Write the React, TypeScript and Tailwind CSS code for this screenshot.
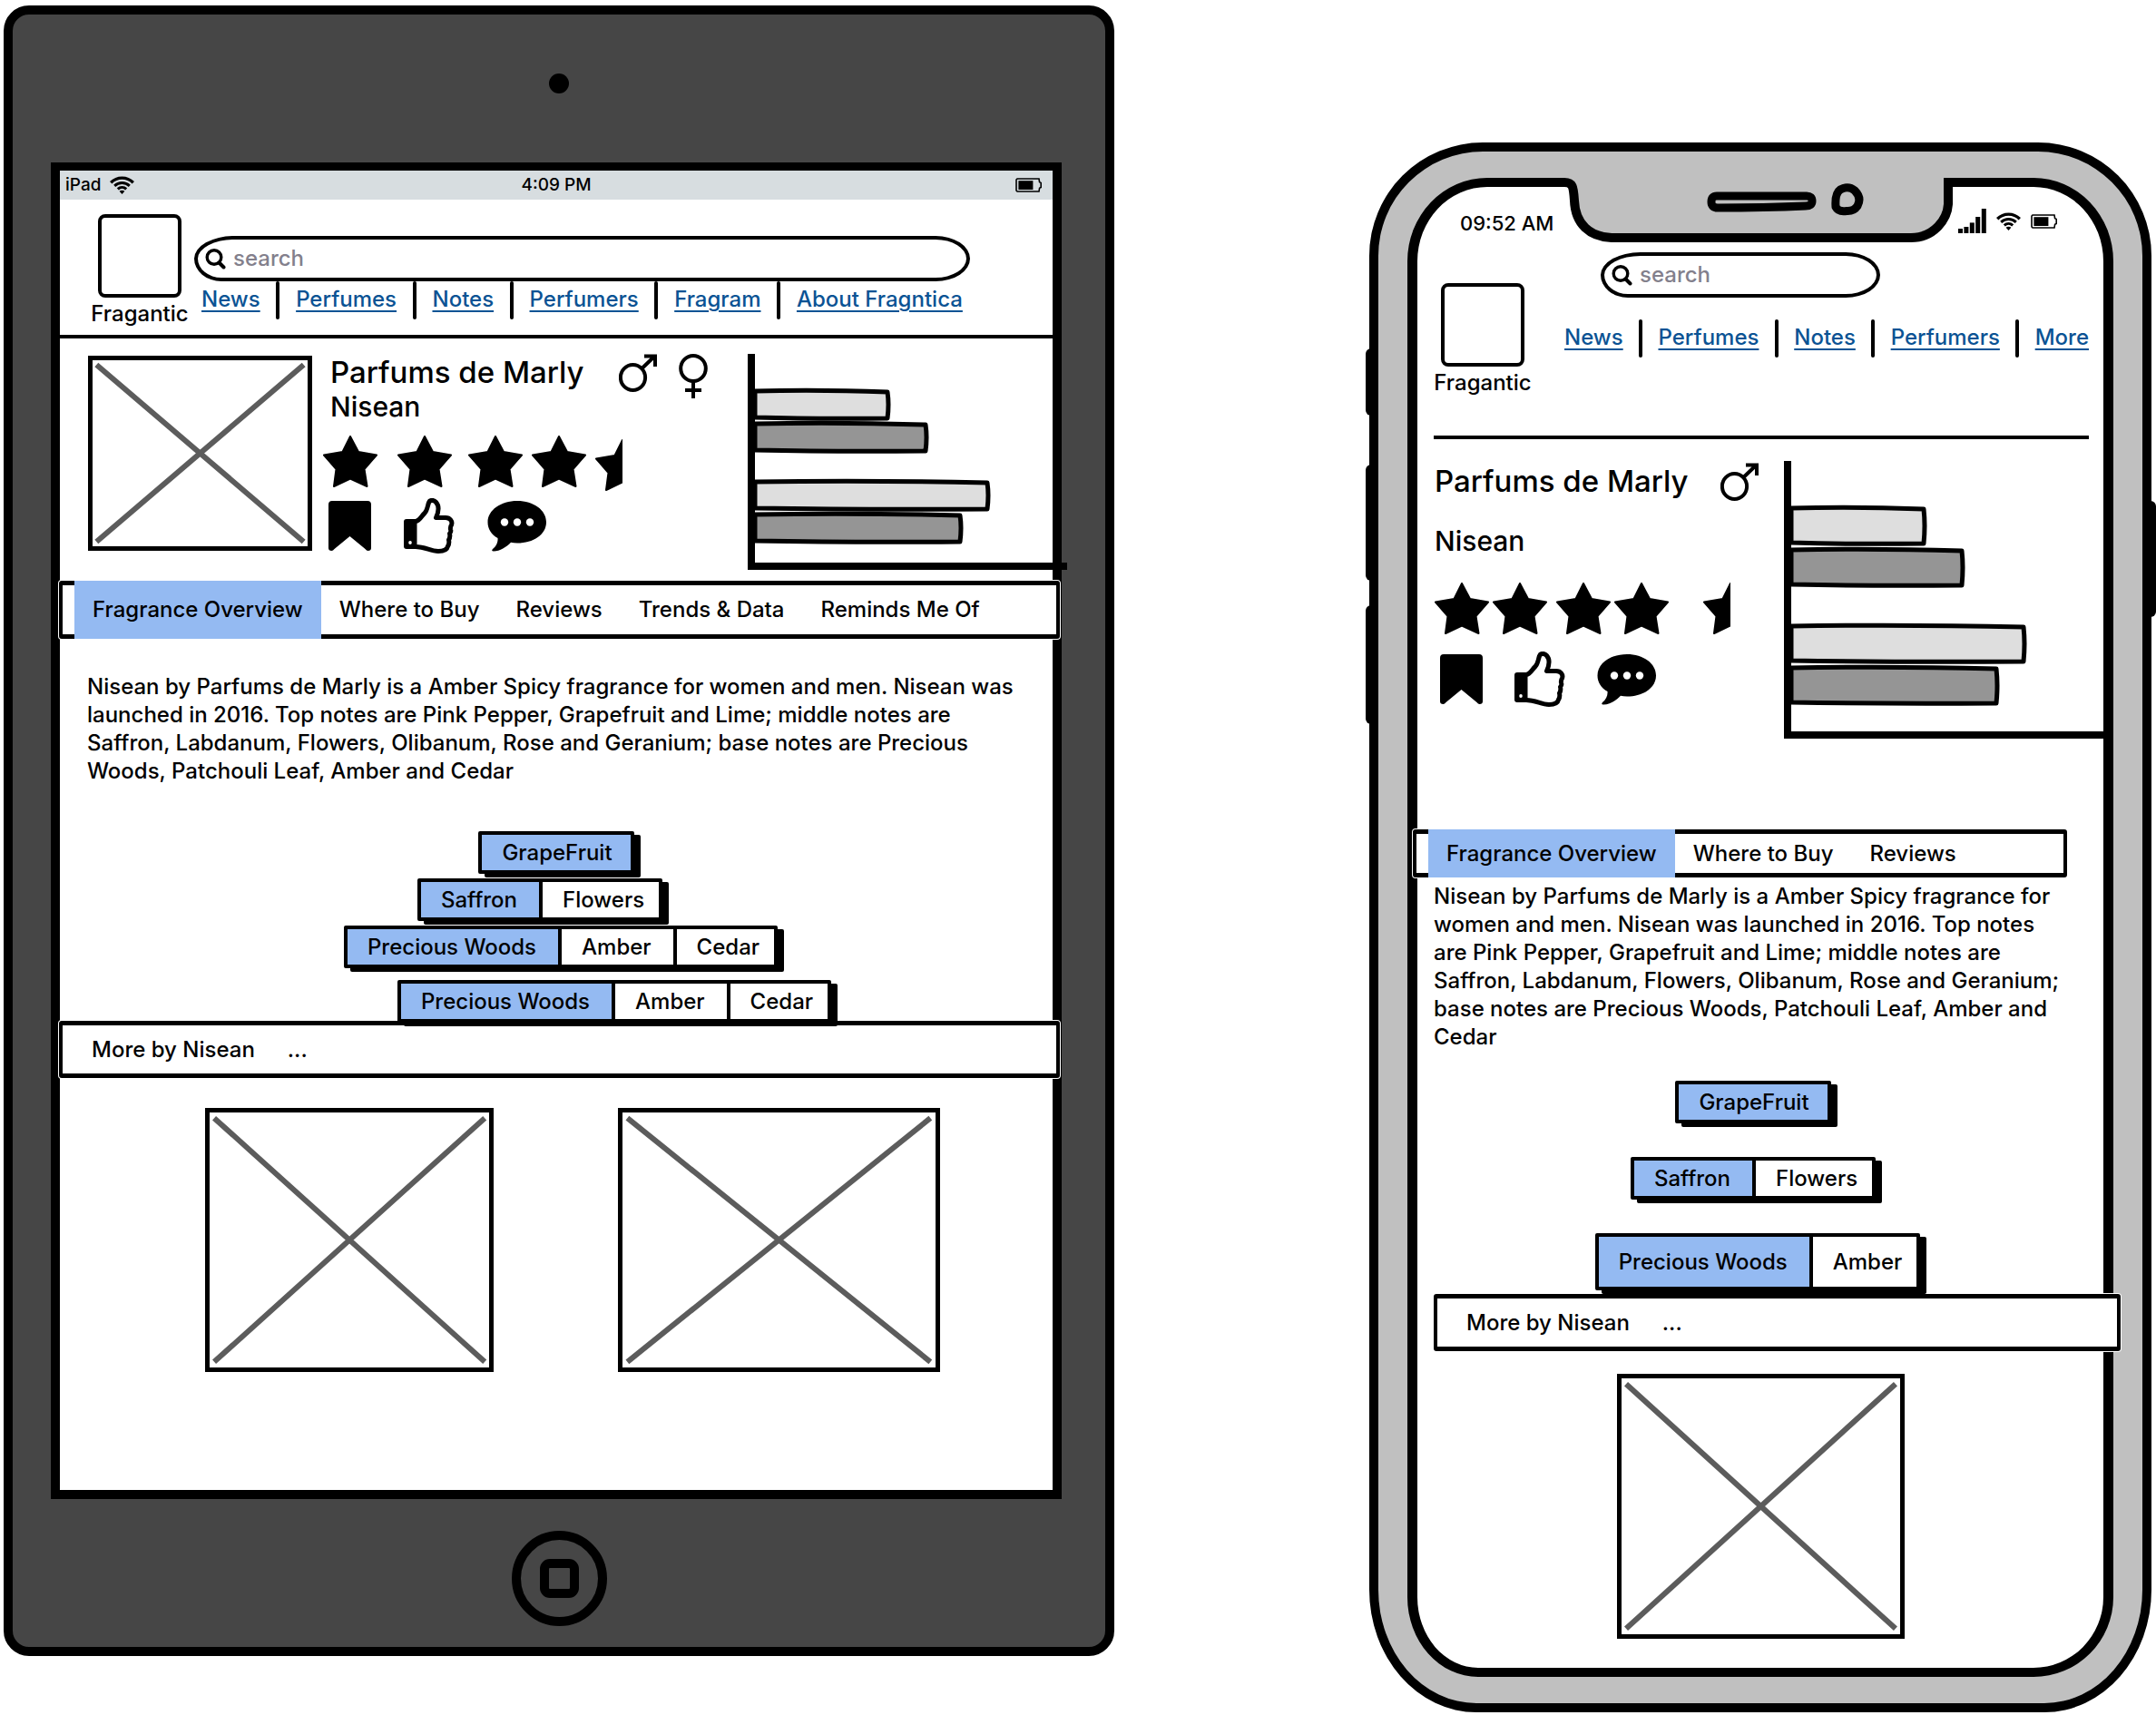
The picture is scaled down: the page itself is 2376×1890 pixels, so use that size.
import React from "react";

const BLURB =
  "Nisean by Parfums de Marly is a Amber Spicy fragrance for women and men. Nisean was launched in 2016. Top notes are Pink Pepper, Grapefruit and Lime; middle notes are Saffron, Labdanum, Flowers, Olibanum, Rose and Geranium; base notes are Precious Woods, Patchouli Leaf, Amber and Cedar";

/* ---------- icons ---------- */

function WifiIcon() {
  return (
    <svg width="27" height="20" viewBox="0 0 27 20" fill="none" stroke="#000" strokeWidth="3" aria-hidden="true">
      <path d="M1.2 7.2C8 0.4 19 0.4 25.8 7.2" strokeWidth="3.4" />
      <path d="M5.2 10.8C10 6.4 17 6.4 21.8 10.8" />
      <path d="M8.8 14.4C11.6 11.8 15.4 11.8 18.2 14.4" />
      <path d="M13.5 20L10.6 16.8C12.2 15.4 14.8 15.4 16.4 16.8Z" fill="#000" stroke="none" />
    </svg>
  );
}

function BatteryIcon() {
  return (
    <svg width="29" height="16" viewBox="0 0 29 16" aria-hidden="true">
      <path d="M2 1H26L26.6 4.6L28.2 5.4V10.4L26.6 11.2L26 15H2L1 14V2Z" fill="none" stroke="#000" strokeWidth="1.6" />
      <rect x="3.4" y="3.2" width="16" height="9.8" fill="#000" />
    </svg>
  );
}

function SignalIcon() {
  return (
    <svg width="31" height="27" viewBox="0 0 31 27" aria-hidden="true">
      <rect x="0" y="22" width="5" height="5" />
      <rect x="6.4" y="20" width="5" height="7" />
      <rect x="12.8" y="15.4" width="5" height="11.6" />
      <rect x="19.2" y="9" width="5" height="18" />
      <rect x="25.8" y="0" width="5" height="27" />
    </svg>
  );
}

function SearchIcon() {
  return (
    <svg width="23" height="23" viewBox="0 0 23 23" fill="none" stroke="#000" strokeLinecap="round" aria-hidden="true">
      <circle cx="10" cy="9.5" r="7.8" strokeWidth="3.4" />
      <path d="M15.5 15.5L20.5 20.5" strokeWidth="4" />
    </svg>
  );
}

function MaleIcon() {
  return (
    <svg width="42" height="42" viewBox="0 0 42 42" fill="none" stroke="#000" strokeWidth="4" role="img" aria-label="For men">
      <ellipse cx="15.5" cy="26" rx="13.6" ry="14" />
      <path d="M26 15.5L38.5 3.5M28 2.4H40V14" />
    </svg>
  );
}

function FemaleIcon() {
  return (
    <svg width="32" height="50" viewBox="0 0 32 50" fill="none" stroke="#000" strokeWidth="4" role="img" aria-label="For women">
      <ellipse cx="16" cy="16" rx="13.8" ry="14" />
      <path d="M16 30V49M7 40H25" />
    </svg>
  );
}

const STAR = "M30 1L39 18L59 21.5L45.5 37L48.5 56L30 47.5L12 56L14.5 37L1 21.5L21.500 18Z";

function Star({ className = "" }: { className?: string }) {
  return (
    <svg className={className} width="60" height="57" viewBox="0 0 60 57" stroke="#000" strokeWidth="2" strokeLinejoin="round" aria-hidden="true">
      <path d={STAR} />
    </svg>
  );
}

function HalfStar({ className = "" }: { className?: string }) {
  return (
    <svg className={className} width="30" height="57" viewBox="0 0 30 57" stroke="#000" strokeWidth="2" strokeLinejoin="round" aria-hidden="true">
      <path d={STAR} />
    </svg>
  );
}

function BookmarkIcon() {
  return (
    <svg width="47" height="55" viewBox="0 0 47 55" aria-hidden="true">
      <path d="M4 0H43Q47 0 47 4V52Q47 55 43.5 55Q42 55 40.5 53L23.5 39L6.5 53Q5 55 3.5 55Q0 55 0 52V4Q0 0 4 0Z" />
    </svg>
  );
}

function ThumbIcon() {
  return (
    <svg width="56" height="61" viewBox="0 0 56 61" fill="none" stroke="#000" aria-hidden="true">
      <path d="M3 23H14.5V56H3Q0 56 0 53V26Q0 23 3 23Z" fill="#000" stroke="none" />
      <ellipse cx="7" cy="49" rx="1.8" ry="2" fill="#fff" stroke="none" />
      <path
        d="M13 25.5C18 25 19 20 23 16.5C26 13.5 26 9 27.5 5C28.5 1.6 33 1.6 35.5 4.5C39.5 9 38 16 35.5 21.5H46C51 21.5 54 25.5 52.5 29.5Q51 31.5 51.5 34.5Q52.5 36.5 50.5 39Q51.5 43 49.5 46Q50.5 50 48.5 53C47.5 58 43 58.5 38 58.5C29 58.5 24 53.5 13 53.5"
        strokeWidth="5"
        strokeLinejoin="round"
      />
    </svg>
  );
}

function CommentIcon() {
  return (
    <svg width="66" height="56" viewBox="0 0 66 56" aria-hidden="true">
      <path d="M33 0C51 0 65 10 65 23.5C65 37 51 46.5 33 46.5Q29 46.5 26 45.800C21 51 14 55.5 7 55.5Q4 55.5 6 53C10 50 12 45 11.5 41C4.5 37 0.5 31 0.5 23.5C0.5 10 15 0 33 0Z" />
      <circle cx="19" cy="23.5" r="4.2" fill="#fff" />
      <circle cx="33" cy="23.5" r="4.2" fill="#fff" />
      <circle cx="47" cy="23.5" r="4.2" fill="#fff" />
    </svg>
  );
}

/* ---------- shared pieces ---------- */

function Logo() {
  return (
    <div className="flex w-[108px] shrink-0 flex-col items-center">
      <div className="h-[92px] w-[92px] rounded-lg border-4 border-black" />
      <span className="leading-9">Fragantic</span>
    </div>
  );
}

function Search({ id, className = "" }: { id: string; className?: string }) {
  return (
    <label
      htmlFor={id}
      className={`flex h-[50px] items-center gap-2 rounded-[44px_38px_38px_30px/25px] border-4 border-black bg-white pl-2 ${className}`}
    >
      <SearchIcon />
      <input
        id={id}
        type="search"
        placeholder="search"
        aria-label="search"
        className="w-full min-w-0 flex-1 bg-transparent pr-6 text-2xl outline-none placeholder:text-[#83808c]"
      />
    </label>
  );
}

function NavLinks({ items, className = "" }: { items: string[]; className?: string }) {
  return (
    <nav className={`flex justify-between ${className}`}>
      {items.map((item, i) => (
        <React.Fragment key={item}>
          {i > 0 && <span className="h-[42px] w-1 rounded-full bg-black" />}
          <a
            href="#"
            className="pt-1 leading-8 whitespace-nowrap text-[#0b5394] underline decoration-2 underline-offset-4"
          >
            {item}
          </a>
        </React.Fragment>
      ))}
    </nav>
  );
}

function Placeholder({ className }: { className: string }) {
  return (
    <div className={`border-[5px] border-black bg-white p-0.5 ${className}`}>
      <svg className="h-full w-full" viewBox="0 0 100 100" preserveAspectRatio="none" role="img" aria-label="Image">
        <path d="M1 1.5L99 98.5M99 1.5L1 98.5" stroke="#5c5c5c" strokeWidth="6" vectorEffect="non-scaling-stroke" />
      </svg>
    </div>
  );
}

function sketchBar(y: number, h: number, end: number) {
  const b = y + h;
  return `M8 ${y + 1}Q${end / 2} ${y - 1} ${end} ${y + 2}Q${end + 2} ${y + h / 2} ${end} ${b}Q${end / 2} ${b + 1} 8 ${b - 1}Z`;
}

function BarChart({ height, barHeight, tops }: { height: number; barHeight: number; tops: number[] }) {
  const ends = [154, 196, 264, 234];
  return (
    <svg
      className="shrink-0"
      width="352"
      height={height}
      viewBox={`0 0 352 ${height}`}
      role="img"
      aria-label="Ratings chart"
    >
      {tops.map((top, i) => (
        <path
          key={top}
          d={sketchBar(top + 2, barHeight - 4, ends[i])}
          fill={i % 2 === 0 ? "#dedede" : "#959595"}
          stroke="#000"
          strokeWidth="5"
          strokeLinejoin="round"
        />
      ))}
      <path d={`M4 0V${height - 4}H352`} fill="none" stroke="#000" strokeWidth="8" />
    </svg>
  );
}

function TabBar({ tabs, className = "" }: { tabs: string[]; className?: string }) {
  return (
    <div
      role="tablist"
      className={`relative z-10 flex rounded-[3px] border-x-4 border-y-[5px] border-black bg-white pl-[13px] ring-1 ring-white ${className}`}
    >
      {tabs.map((tab, i) => (
        <button
          key={tab}
          type="button"
          role="tab"
          aria-selected={i === 0}
          className={
            i === 0
              ? "-my-[5px] bg-[#94baf2] px-5 whitespace-nowrap"
              : "px-5 whitespace-nowrap"
          }
        >
          {tab}
        </button>
      ))}
    </div>
  );
}

function MoreBar({ className }: { className: string }) {
  return (
    <div
      className={`relative flex h-[63px] items-center gap-9 rounded-[3px] border-x-4 border-y-[5px] border-black bg-white pl-8 ring-1 ring-white ${className}`}
    >
      <button type="button">More by Nisean</button>
      <button type="button" aria-label="More">...</button>
    </div>
  );
}

function Notes({ items, className }: { items: string[]; className: string }) {
  return (
    <div
      className={`relative z-20 flex divide-x-4 divide-black rounded-[2px] border-4 border-black bg-white shadow-[7px_4px_0_#000] ${className}`}
    >
      {items.map((item, i) => (
        <button
          key={item}
          type="button"
          className={
            i === 0
              ? "bg-[#94baf2] pr-6 pl-[22px] whitespace-nowrap last:pr-5"
              : "pr-6 pl-[22px] whitespace-nowrap last:pr-4"
          }
        >
          {item}
        </button>
      ))}
    </div>
  );
}

function Actions({ className }: { className: string }) {
  return (
    <div className={`flex items-center ${className}`}>
      <button type="button" aria-label="Save">
        <BookmarkIcon />
      </button>
      <button type="button" aria-label="Like">
        <ThumbIcon />
      </button>
      <button type="button" aria-label="Comment">
        <CommentIcon />
      </button>
    </div>
  );
}

/* ---------- devices ---------- */

function Tablet() {
  return (
    <section
      aria-label="Tablet"
      className="mt-1.5 flex flex-col items-center rounded-[28px] border-[10px] border-black bg-[#464646] px-[42px] pb-[23px]"
    >
      <div className="mt-[65px] h-[22px] w-[22px] rounded-full bg-black" />

      <div className="mt-[76px] mr-1.5 self-stretch border-[10px] border-t-[9px] border-black bg-white">
        <div className="grid h-8 grid-cols-3 items-center bg-[#d7dde0] px-1.5 text-[19px]">
          <span className="flex items-center gap-2.5">
            iPad <WifiIcon />
          </span>
          <span className="text-center">4:09 PM</span>
          <span className="flex justify-end pr-1.5">
            <BatteryIcon />
          </span>
        </div>

        <header className="flex gap-1.5 border-b-4 border-black pr-[91px] pb-[5px] pl-[34px]">
          <div className="pt-4">
            <Logo />
          </div>
          <div className="flex-1 pt-10">
            <Search id="tablet-search" />
            <NavLinks
              className="px-2"
              items={["News", "Perfumes", "Notes", "Perfumers", "Fragram", "About Fragntica"]}
            />
          </div>
        </header>

        <div className="flex pb-3 pl-[31px]">
          <Placeholder className="mt-[19px] h-[215px] w-[247px] shrink-0" />
          <div className="ml-3 pt-[17px]">
            <div className="flex pl-2">
              <div className="w-[318px]">
                <h1 className="text-[33px] leading-10 whitespace-nowrap">Parfums de Marly</h1>
                <h2 className="text-3xl leading-9">Nisean</h2>
              </div>
              <div className="flex items-start gap-6">
                <MaleIcon />
                <FemaleIcon />
              </div>
            </div>
            <div className="mt-3.5 flex gap-2.5" role="img" aria-label="4.5 stars">
              <Star />
              <Star className="ml-3" />
              <Star className="ml-2" />
              <Star />
              <HalfStar className="mt-1" />
            </div>
            <Actions className="mt-2 gap-9 pl-1.5" />
          </div>
          <div className="relative z-10 -mr-4 ml-auto pt-[17px]">
            <BarChart height={238} barHeight={35} tops={[38, 74, 138, 174]} />
          </div>
        </div>

        <TabBar
          className="-mr-2 -ml-px h-16"
          tabs={["Fragrance Overview", "Where to Buy", "Reviews", "Trends & Data", "Reminds Me Of"]}
        />

        <p className="mt-[37px] pr-7 pl-[30px] leading-[31px]">{BLURB}</p>

        <div className="mt-[51px] flex flex-col items-center gap-[5px]">
          <Notes className="h-[47px]" items={["GrapeFruit"]} />
          <Notes className="mr-9 h-[47px]" items={["Saffron", "Flowers"]} />
          <Notes className="ml-2.5 h-[47px]" items={["Precious Woods", "Amber", "Cedar"]} />
          <Notes className="mt-2 ml-32 h-[47px]" items={["Precious Woods", "Amber", "Cedar"]} />
        </div>

        <MoreBar className="z-10 -mt-0.5 -mr-2 -ml-px" />

        <div className="flex gap-[137px] pt-[33px] pr-[124px] pb-[130px] pl-[160px]">
          <Placeholder className="h-[291px] flex-[317]" />
          <Placeholder className="h-[291px] flex-[355]" />
        </div>
      </div>

      <button
        type="button"
        aria-label="Home"
        className="mt-[35px] flex h-[105px] w-[105px] items-center justify-center rounded-full border-[10px] border-black"
      >
        <span className="h-[43px] w-[43px] rounded-[11px] border-[10px] border-black" />
      </button>
    </section>
  );
}

function Notch() {
  return (
    <svg
      className="absolute -top-[11px] left-1/2 z-10 -ml-[230px]"
      width="450"
      height="74"
      viewBox="0 0 450 74"
      fill="none"
      aria-hidden="true"
    >
      <path
        d="M15 0H442L440 12H437V30C437 52 420 66 396 66H66C40 66 27 48 26 22C26 10 22 6 12 5Z"
        fill="#c0c0c0"
      />
      <path
        d="M0 6H14C23 6 24 10 25 26C26 52 42 66 66 67H396C422 67 436 46 437 30V6H450"
        stroke="#000"
        strokeWidth="10"
      />
      <path d="M30 0H430V2H30Z" fill="#c0c0c0" />
      <path
        d="M182 21Q176 21 176 27.5Q176 34 183 34Q235 34 280 32Q287 32 287 26.5Q287 21 281 21Z"
        stroke="#000"
        strokeWidth="9"
        strokeLinejoin="round"
      />
      <path
        d="M318 14Q327 9 334 15Q342 23 337 32Q333 38 325 37.5Q316 39 313 33Q312 18 318 14Z"
        stroke="#000"
        strokeWidth="9"
        strokeLinejoin="round"
      />
    </svg>
  );
}

function Phone() {
  return (
    <section
      aria-label="Phone"
      className="relative mt-[157px] rounded-[125px_125px_118px_118px/125px_125px_135px_135px] border-[10px] border-black bg-[#c0c0c0] px-8 py-[29px]"
    >
      <span className="absolute top-[217px] -left-[14px] h-[74px] w-2 rounded-l-md bg-black" />
      <span className="absolute top-[345px] -left-[14px] h-[128px] w-2 rounded-l-md bg-black" />
      <span className="absolute top-[500px] -left-[14px] h-[131px] w-2 rounded-l-md bg-black" />
      <span className="absolute top-[385px] -right-[15px] h-[128px] w-2 rounded-r-md bg-black" />

      <div className="relative rounded-[88px_88px_88px_78px/92px_92px_88px_88px] border-x-[11px] border-y-[10px] border-black bg-white">
        <Notch />

        <div className="flex items-start justify-between pt-6 pr-[51px] pl-[47px] leading-8">
          <span className="text-[22px]">09:52 AM</span>
          <span className="flex items-center gap-[11px]">
            <SignalIcon />
            <WifiIcon />
            <BatteryIcon />
          </span>
        </div>

        <header className="mr-4 ml-[18px] flex gap-9 border-b-4 border-black pb-10">
          <div className="pt-[50px]">
            <Logo />
          </div>
          <div className="flex-1 pt-4">
            <Search id="phone-search" className="mr-[230px] ml-10" />
            <NavLinks className="mt-6" items={["News", "Perfumes", "Notes", "Perfumers", "More"]} />
          </div>
        </header>

        <div className="flex pb-[100px] pl-[19px]">
          <div className="pt-[26px]">
            <div className="flex items-start gap-[34px]">
              <h1 className="w-[281px] text-[33px] leading-10 whitespace-nowrap">Parfums de Marly</h1>
              <MaleIcon />
            </div>
            <h2 className="mt-[26px] text-3xl leading-9">Nisean</h2>
            <div className="mt-7 flex gap-1" role="img" aria-label="4.5 stars">
              <Star />
              <Star />
              <Star className="ml-1.5" />
              <Star />
              <HalfStar className="ml-[34px]" />
            </div>
            <Actions className="mt-[19px] gap-[35px] pl-1.5" />
          </div>
          <div className="relative ml-auto pt-6">
            <BarChart height={306} barHeight={44} tops={[49, 95, 179, 225]} />
          </div>
        </div>

        <TabBar className="mr-10 -ml-[5px] h-[53px]" tabs={["Fragrance Overview", "Where to Buy", "Reviews"]} />

        <p className="mt-[5px] pr-9 pl-[18px] leading-[31px]">{BLURB}</p>

        <div className="mt-[33px] flex flex-col items-center gap-[37px] pr-4">
          <Notes className="h-[47px]" items={["GrapeFruit"]} />
          <Notes className="h-[47px]" items={["Saffron", "Flowers"]} />
          <Notes className="ml-2.5 h-[63px]" items={["Precious Woods", "Amber"]} />
        </div>

        <MoreBar className="mt-1 -mr-[19px] ml-[18px]" />

        <div className="flex justify-center pt-[25px] pb-8">
          <Placeholder className="h-[292px] w-[317px]" />
        </div>
      </div>
    </section>
  );
}

export default function App() {
  return (
    <main className="grid grid-cols-[1224fr_862fr] items-start gap-[281px] bg-white pr-[5px] pl-1 font-['Inter',sans-serif] text-2xl font-medium text-black">
      <Tablet />
      <Phone />
    </main>
  );
}
